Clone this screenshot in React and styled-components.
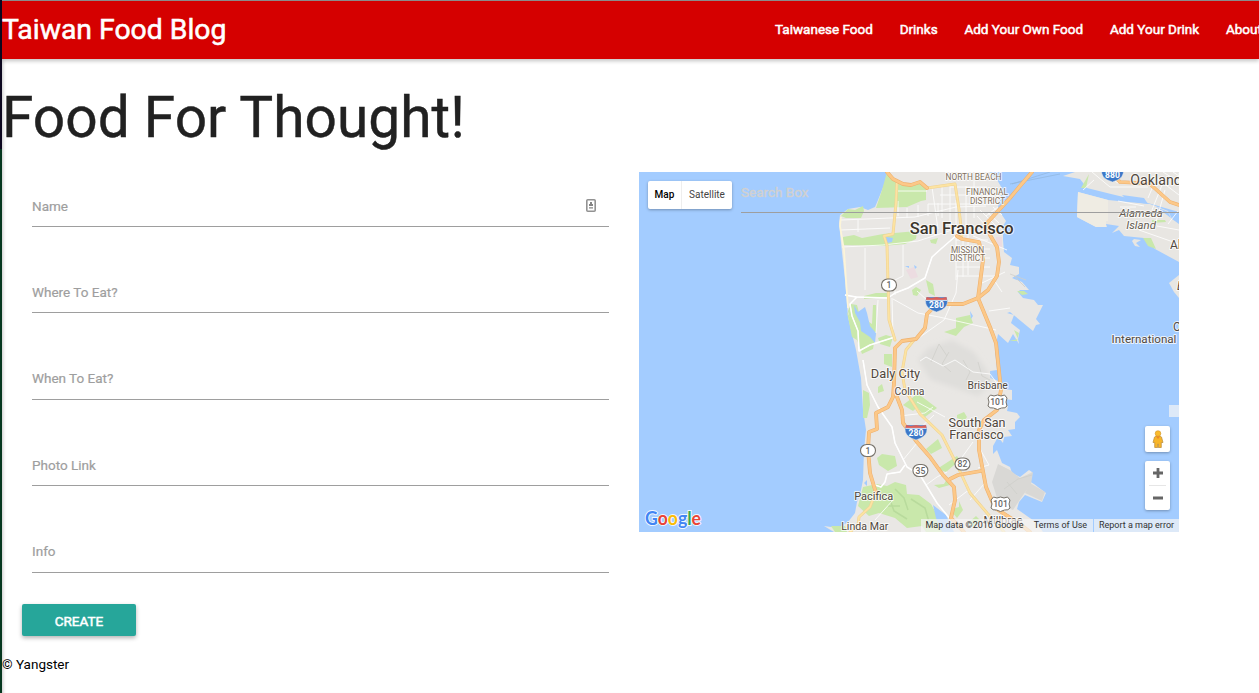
import React from "react";
import styled, { createGlobalStyle } from "styled-components";

const Global = createGlobalStyle`
  * { box-sizing: border-box; }
  html, body { margin: 0; height: 100%; overflow: hidden; background: #fff; }
  body { font-family: Roboto, "Liberation Sans", sans-serif; font-size: 13.5px; color: #212121; }
`;

const Page = styled.div`
  display: flex;
  height: 693px;
  overflow: hidden;
`;

const Edge = styled.div`
  flex: 0 0 2px;
  background: linear-gradient(#0d0820 0 149px, #06371f 149px);
`;

const Main = styled.main`
  flex: 1;
  min-width: 0;
  display: flex;
  flex-direction: column;
  box-shadow: inset 4px 0 4px -4px rgba(0, 0, 0, 0.35);
`;

const NavBar = styled.nav`
  position: relative;
  display: flex;
  align-items: center;
  justify-content: space-between;
  height: 59px;
  flex: none;
  background: #d50000;
  border-top: 1px solid #8b8b8b;
  box-shadow: 0 2px 4px rgba(0, 0, 0, 0.24);
  color: #fff;
`;

const Brand = styled.a`
  font-size: 28.35px;
  line-height: 58px;
  -webkit-text-stroke: 0.55px #fff;
  white-space: nowrap;
`;

const NavLinks = styled.div`
  display: flex;
  gap: 26.8px;
  width: 486px;
  overflow: hidden;
  white-space: nowrap;
  padding: 0 0 2px 2px;
`;

const NavLink = styled.a`
  flex: none;
  font-size: 13.5px;
  line-height: 56px;
  -webkit-text-stroke: 0.5px #fff;
`;

const Heading = styled.h1`
  margin: 0;
  height: 113px;
  font-size: 56.85px;
  font-weight: 400;
  line-height: 117px;
  white-space: nowrap;
  -webkit-text-stroke: 0.4px #212121;
`;

const Columns = styled.div`
  display: grid;
  grid-template-columns: 607px 540px;
  column-gap: 30px;
`;

const Form = styled.form`
  display: flex;
  flex-direction: column;
  align-items: stretch;
  padding-left: 30px;
`;

const Field = styled.label`
  display: flex;
  align-items: center;
  justify-content: space-between;
  height: 55px;
  padding: 13px 13px 0 0;
  margin-bottom: 31.4px;
  border-bottom: 1px solid #9e9e9e;
  color: #9e9e9e;
  -webkit-text-stroke: 0.2px #9e9e9e;
`;

const CreateButton = styled.button`
  width: 114px;
  height: 32px;
  margin: 0 0 0 -10px;
  padding: 2px 0 0;
  border: 0;
  border-radius: 2px;
  background: #26a69a;
  color: #fff;
  font: 400 13.5px/30px Roboto, "Liberation Sans", sans-serif;
  -webkit-text-stroke: 0.5px #fff;
  box-shadow: 0 2px 4px rgba(0, 0, 0, 0.3);
`;

const Footer = styled.footer`
  margin-top: 18px;
  line-height: 20px;
  color: #000;
`;

const MapFrame = styled.section`
  position: relative;
  width: 540px;
  height: 360px;
  overflow: hidden;
  background: #a3ccff;
`;

const MapArt = styled.svg`
  display: block;
  font-family: Roboto, "Liberation Sans", sans-serif;
`;

const MapToolbar = styled.div`
  position: absolute;
  top: 9px;
  left: 9px;
  right: 0;
  display: flex;
  align-items: flex-start;
  gap: 9px;
`;

const TypeSwitch = styled.div`
  display: flex;
  width: 84px;
  height: 28px;
  background: #fff;
  border-radius: 2px;
  box-shadow: 0 1px 3px rgba(0, 0, 0, 0.3);
`;

const TypeOption = styled.span`
  flex: ${(p) => (p.$active ? "0 0 33px" : "1")};
  text-align: center;
  line-height: 27px;
  font-size: 10px;
  font-weight: ${(p) => (p.$active ? 500 : 400)};
  color: ${(p) => (p.$active ? "#000" : "#444")};
  border-left: ${(p) => (p.$active ? "0" : "1px solid #eee")};
`;

const SearchBox = styled.div`
  flex: 1;
  height: 32px;
  line-height: 22px;
  color: #d1d1d1;
  -webkit-text-stroke: 0.4px #d1d1d1;
  border-bottom: 1px solid #9e9e9e;
`;

const SideControls = styled.div`
  position: absolute;
  right: 9px;
  top: 254px;
  width: 25px;
  display: flex;
  flex-direction: column;
  gap: 9px;
`;

const ControlCard = styled.div`
  display: flex;
  flex-direction: column;
  align-items: center;
  justify-content: center;
  height: ${(p) => p.$h}px;
  background: #fff;
  border-radius: 2px;
  box-shadow: 0 1px 3px rgba(0, 0, 0, 0.3);
`;

const CollapsedPanel = styled.div`
  position: absolute;
  right: 0;
  top: 233px;
  width: 10px;
  height: 12px;
  background: rgba(245, 245, 245, 0.7);
`;

const Attribution = styled.div`
  position: absolute;
  right: 0;
  bottom: 0;
  display: flex;
  height: 13px;
  font-size: 9px;
  line-height: 13px;
  color: #333;
  white-space: nowrap;
`;

const Credit = styled.span`
  width: ${(p) => p.$w}px;
  text-align: center;
  background: rgba(245, 245, 245, 0.7);
  margin-left: ${(p) => (p.$split ? 1 : 0)}px;
`;

const Logo = styled.svg`
  position: absolute;
  left: 3px;
  bottom: 0;
  font-family: Lato, "Liberation Sans", sans-serif;
`;

const LAND =
  "M887 172L885 183L882 190L878 200L875 207L868 210L860 207L848 209L840 215L839 223L841 243L845 280L848 317L856 350L861 378L863 410L866 430L864 450L863 480L860 495L857 502L855 513L848 522L838 528L824 526L834 532H1043L1037 523L1017 509L1019 502L1025 495L1042 502L1046 493L1034 484L1029 481L1032 472L1029 470L1020 477L1012 473L1010 467L1002 463L997 450L993 454V446L998 437L1003 443L1004 437L1012 436L1008 430L1015 429V422L1020 417L1017 413L1007 411L1008 406L1003 403L1004 399L1012 400V390L1003 389L1001 383L996 380L990 378V371L997 370L995 350L998 334L1008 343L1013 334L1019 344L1018 339L1020 330L1011 323L1014 315L1007 313L1010 312L1033 331L1036 325L1040 324L1036 319L1043 305H1038L1034 300L1023 298L1018 292L1020 290L1029 290L1022 282L1012 278L1019 274V267L1010 265L1012 258L1004 252L1003 240L1003 226L1006 221L1002 215L998 207L1003 190L996 178L990 172Z";

const PARKS = [
  "M887 172L894 179L904 185L919 182L926 188V200L921 201L907 207L876 208L882 190Z",
  "M841 216L848 209L855 210L863 206L864 211L861 218H846Z",
  "M843 237L854 235L862 238L883 234L917 231L916 239L905 244L883 246L843 245Z",
  "M851 304L857 305L860 316L872 324L873 305H876V332L873 349L862 354L857 340L852 328L848 311Z",
  "M847 312L853 323L857 340L852 337Z",
  "M878 338L886 335L893 337L890 347L880 344Z",
  "M912 290l4-3 5 3-4 6-4-1z",
  "M926 280l7 4 2 12-6-3z",
  "M864 296l12-3 12 0v4l-24 2z",
  "M944 332l12-4 0-10 14-3 3 8-9 4-8 9z",
  "M930 240l8-2-2 6-5-1z",
  "M884 354h8v13l-8-3z",
  "M863 390l6 3 1 12-3 13-4 0z",
  "M878 387l4-3 2 7-6 2z",
  "M903 405l13-10 4 10-7 6z",
  "M917 393l20 15-12 9-13-16z",
  "M957 415l7-3 3 5-3 4-7-3z",
  "M877 458l5-4 13 2 2 10-9 5-9-6z",
  "M926 449l12-10 4 9-11 6z",
  "M937 469l20-13 3 4-14 12z",
  "M863 487l14-3 10 2 8-4 11 3 1 9 12 1 12 9 12 22 5 6h-22l-4-6-15 2-12-10-16-5-10 3-11-10z",
  "M934 485l10-1 4-7 2 8-11 3z",
  "M952 509l7-2 0-6 4 9-6 8-5-6z",
  "M968 523l8-7 5 5-8 7z",
  "M1009 341l9-2-4-9 5 3-2 8z",
  "M831 526l14 0 2 6h-12z",
  "M1017 291l7 0 4 3-6 1z",
];

const STREETS = [
  "M841 220L915 217L956 207L986 206", "M841 230L890 228", "M842 247L883 245L918 241L955 229L985 226",
  "M858 220V232M865 248V290M895 191H927M932 187L938 229M942 187V218M950 184V230M956 200V280M966 186V225M974 180V218",
  "M845 295L856 297L888 298L895 293L908 288L925 278L932 257L942 248L957 235",
  "M857 297L850 304L852 316L858 331L859 351L870 345L895 337",
  "M878 300L876 333M892 298L893 335M893 299L918 313L939 317L970 324L996 330",
  "M895 295V280L903 276V245M917 291L927 300L937 300",
  "M863 360L867 385L878 407L892 427L895 443L907 467L920 475L937 503L951 520",
  "M905 465L900 472L887 474L885 482L881 487L875 485",
  "M900 416L925 413L933 407M917 402L945 417M918 430L934 415M903 460L917 443M920 361L926 357L943 366L955 360L973 372L990 374L1002 390",
  "M956 276H998M973 236L1007 250M994 280L1002 292M989 311L1010 308M982 283L1005 272",
  "M920 337L944 320L956 293L958 270M963 233V277M968 230V275M956 240H988M956 249H990M956 258H990M956 267H990",
  "M986 216L998 207M980 210L996 226M977 216L990 230M987 212L999 223M993 207L1002 215",
  "M926 485L937 477L947 472M960 460L973 442M980 449L989 465L978 468M949 505L970 489M970 500L984 484M893 500L884 510L875 520",
  "M950 187H987M940 195H992M928 204H998M898 201V216M907 208V218M918 205V217M928 204V216M938 203V216",
];

const EAST_STREETS = "M1092 172L1110 187H1148M1083 190L1094 180M1101 172L1118 183M1148 198L1156 179M1152 210L1162 185M1156 222L1165 190M1158 179L1179 195M1163 172L1179 182M1173 172L1179 176M1139 230L1179 244M1157 226L1179 230M1168 224L1178 211M1118 201L1144 206M1120 207H1136";

const ORANGE = [
  "M887 172L893 179L903 184L911 185L920 182L927 188",
  "M1032 172L1020 186L1010 198L987 223L990 235L997 247L999 262L997 276L988 290L978 298L963 304L937 304L927 314L925 328L916 339L902 341L895 348L894 383L893 397L888 407L876 413L877 429L869 432L868 450L870 473L876 493",
  "M957 236L962 239L979 242L983 260L978 298L990 327L996 343L1001 390L997 410L984 420L979 430V450L986 487L995 508L1020 524L1030 532",
  "M897 397L902 410L903 423L917 442L930 457L943 475L954 487L955 500L951 518L964 532",
  "M950 479L958 475L981 471",
];

const YELLOW = [
  "M927 188L955 184L959 209L962 236",
  "M897 181L896 203L893 234L884 236L887 245L889 320L895 340",
  "M914 340L906 350L902 372L905 390L920 414L942 435L957 465L970 493L987 513L1004 532",
  "M875 494L870 507L859 517L858 525L850 532",
];

const LABELS = [
  ["NORTH BEACH", 973.5, 180, 8.3, "#806f5d"], ["FINANCIAL", 987, 195, 8.3, "#806f5d"], ["DISTRICT", 987.5, 203.5, 8.3, "#806f5d"],
  ["San Francisco", 961.7, 234, 16.5, "#3d362d", 500], ["MISSION", 967.5, 253, 8.3, "#806f5d"], ["DISTRICT", 967.5, 261, 8.3, "#806f5d"],
  ["Daly City", 895.5, 378, 12.8, "#51483e"], ["Colma", 909.5, 395, 10.4, "#51483e"], ["Brisbane", 987.7, 388.5, 10.3, "#51483e"],
  ["South San", 977, 426.5, 12.6, "#51483e"], ["Francisco", 976.5, 439, 12.6, "#51483e"], ["Pacifica", 873.7, 499.5, 11, "#51483e"],
  ["Linda Mar", 864.7, 530, 10.6, "#51483e"], ["Millbrae", 1003, 524, 11, "#51483e"],
  ["Oakland", 1156, 185, 14.2, "#51483e"], ["International", 1144, 342.5, 11.6, "#51483e"],
];

function Roads({ paths, color, casing, width }) {
  return (
    <g fill="none" strokeLinejoin="round" strokeLinecap="round">
      {paths.map((d) => <path key={d} d={d} stroke={casing} strokeWidth={width + 1.1} />)}
      {paths.map((d) => <path key={d} d={d} stroke={color} strokeWidth={width} />)}
    </g>
  );
}

function RouteBadge({ x, y, n, us }) {
  return (
    <g transform={`translate(${x} ${y})`}>
      {us
        ? <path d="M-7-7Q-3.500-5 0-7Q3.500-5 7-7L9.500-4Q7.500 0 9.500 4Q8 6.500 4 6L0 7.500L-4 6Q-8 6.500-9.500 4Q-7.500 0-9.500-4Z" fill="#fff" stroke="#77726a" />
        : <rect x="-7.5" y="-6" width="15" height="12" rx="6" fill="#fff" stroke="#77726a" strokeWidth="1.1" />}
      <text y="3" textAnchor="middle" fontSize="8.6" fontWeight="500" fill="#666">{n}</text>
    </g>
  );
}

function Interstate({ x, y, n }) {
  return (
    <g transform={`translate(${x} ${y})`}>
      <path d="M-10-7H10L11-3Q11 3 5 6L0 8L-5 6Q-11 3-11-3Z" fill="#3c78c8" stroke="#dfe9f2" strokeWidth=".5" />
      <path d="M-10-7L-5-6L0-7L5-6L10-7L10.500-4H-10.500Z" fill="#d8615b" />
      <path d="M-10.500-3.600H10.500" stroke="#fff" strokeWidth=".8" />
      <text y="4" textAnchor="middle" fontSize="8.6" fontWeight="700" fill="#fff">{n}</text>
    </g>
  );
}

function BayMap() {
  return (
    <MapArt width="540" height="360" viewBox="639 172 540 360">
      <defs>
        <filter id="hills" x="-20%" y="-20%" width="140%" height="140%"><feGaussianBlur stdDeviation="2.5" /></filter>
      </defs>
      <path d="M1012 184L1050 172M1010 184L1060 174" stroke="#90b6dd" strokeWidth=".7" />
      <path d={LAND} fill="#e9e7e4" />
      <path d="M918 360l10-12 24-8 22 12 14 20 4 12-14 12-23-8-24-8z" fill="#dfdedb" filter="url(#hills)" />
      <path d="M992 482l6-18 12 6 10 8 13-6-2 12-10 14-8 12-14-6z" fill="#d9d8d5" />
      <path d="M1030 483l15 9-3 9-17-8z" fill="#d9d8d5" />
      <g fill="#e8e6e2">
        <path d="M1063 176L1075 172H1179V212L1165 208L1148 203L1136 200L1111 194L1087 188L1080 179Z" />
        <path d="M1078 192L1108 200L1128 202L1150 204L1168 211L1172 219L1179 224V262L1155 249L1144 238L1124 236L1119 230L1112 233L1119 226L1106 224L1107 227H1096L1077 217Z" />
        <path d="M1179 275L1169 283L1174 292L1179 298Z" />
        <path d="M1134 239l7 1-5 3 4 4-5-1-3-5z" />
      </g>
      <path d="M1078 192L1108 200V221H1106V227H1096L1077 217Z" fill="#efece3" />
      <path d="M1122 195l22 3 4 6-20-3zM1156 207l12 5 3 6-8-6z" fill="#a3ccff" />
      <g fill="#c9e8ab">
        {PARKS.map((d) => <path key={d} d={d} />)}
        <path d="M1081 188l8-14-3 14zM1143 238l8 0 5 11-8-3zM1152 220h13l1 2-14 1z" />
      </g>
      <path d="M906 270l8-3 4 10-7 2zM996 237h6v11h-5z" fill="#ecdce1" />
      <path d="M854 305L858 312L865 307L867 313L870 326L876 333L875 343L870 337L861 331L860 322L855 313ZM886 237l7 1-1 4-5 1zM933 505l13 10 8 17h-12l-6-14zM970 311l3 5-2 3zM905 266l4 0v2zM914 265l3 2-2 2zM864 483l3-3v6z" fill="#a3ccff" />
      <g fill="none" stroke="#b4d799" strokeWidth="1.5" opacity=".8">
        <path d="M878 492l11 5 5 14 13 8M895 489l9 9 4 12M911 499l14 9 4 14M888 506l12 0" />
      </g>
      <path d="M931 362l8-18 8 12M949 352l-7 12 9 8M963 360l7 12-4 8M978 362l4 14 8 4M1014 276l11 11M1010 274l16 6M1004 489l14-10 14-4M1007 482l10 12" fill="none" stroke="#cfcfca" strokeWidth=".8" />
      <g fill="none" stroke="#fff" strokeWidth="1" strokeLinejoin="round" opacity=".8">
        {STREETS.map((d) => <path key={d} d={d} />)}
        <path d={EAST_STREETS} />
      </g>
      <g fill="none" stroke="#fff" strokeWidth="1.5" strokeLinejoin="round">
        <path d={STREETS[4]} />
        <path d={STREETS[5]} />
        <path d={STREETS[8]} />
        <path d={STREETS[9]} />
      </g>
      <path d="M841 217L840 226L844 250L846 280L848 308" fill="none" stroke="#fdf5d8" strokeWidth="1.7" />
      <Roads paths={YELLOW} color="#fce3a2" casing="#f0d292" width={1.8} />
      <Roads paths={ORANGE} color="#fcc888" casing="#eeb06d" width={2.7} />
      <Roads paths={["M1110 172L1120 182L1140 183L1150 184L1160 193L1170 202L1179 205"]} color="#fcc888" casing="#eeb06d" width={2.5} />
      <RouteBadge x={889} y={285} n="1" />
      <RouteBadge x={868} y={450.5} n="1" />
      <RouteBadge x={920.4} y={470.5} n="35" />
      <RouteBadge x={962.5} y={464} n="82" />
      <RouteBadge x={997.5} y={402} n="101" us />
      <RouteBadge x={1000.5} y={504} n="101" us />
      <Interstate x={936.5} y={304} n="280" />
      <Interstate x={916} y={432} n="280" />
      <Interstate x={1112.5} y={174} n="880" />
      <g textAnchor="middle" stroke="#fff" strokeOpacity=".75" strokeWidth="2" paintOrder="stroke" strokeLinejoin="round">
        {LABELS.map(([label, x, y, size, fill, weight = 400]) => (
          <text key={label + x + y} x={x} y={y} fontSize={size} fontWeight={weight} fill={fill}>{label}</text>
        ))}
        <g fontSize="11.4" fontStyle="italic" fill="#655c51">
          <text x="1141" y="217">Alameda</text>
          <text x="1141" y="229">Island</text>
        </g>
        <g textAnchor="start" fontSize="12" fill="#51483e">
          <text x="1170" y="249">Ala</text>
          <text x="1173" y="331">Oak</text>
          <text x="1177" y="290" fontStyle="italic">B</text>
        </g>
      </g>
      <path d="M741 212.500H1179" stroke="#9e9e9e" />
    </MapArt>
  );
}

const LOGO = [["G", "#4285f4"], ["o", "#ea4335"], ["o", "#fbbc05"], ["g", "#4285f4"], ["l", "#34a853"], ["e", "#ea4335"]];

export default function App() {
  return (
    <Page>
      <Global />
      <Edge />
      <Main>
        <NavBar>
          <Brand>Taiwan Food Blog</Brand>
          <NavLinks>
            {["Taiwanese Food", "Drinks", "Add Your Own Food", "Add Your Drink", "About"].map((t) => <NavLink key={t}>{t}</NavLink>)}
          </NavLinks>
        </NavBar>
        <Heading>Food For Thought!</Heading>
        <Columns>
          <Form>
            {["Name", "Where To Eat?", "When To Eat?", "Photo Link", "Info"].map((t) => (
              <Field key={t}>
                {t}
                {t === "Name" && (
                  <svg width="10" height="13" viewBox="0 0 10 13">
                    <rect x=".8" y=".8" width="8.4" height="11.4" rx="1" fill="#fff" stroke="#929292" strokeWidth="1.6" />
                    <path d="M4 3h2v2h1v2H3V5h1zM3 8.2h4v1.300H3z" fill="#858585" />
                  </svg>
                )}
              </Field>
            ))}
            <CreateButton type="button">CREATE</CreateButton>
          </Form>
          <MapFrame>
            <BayMap />
            <MapToolbar>
              <TypeSwitch>
                <TypeOption $active>Map</TypeOption>
                <TypeOption>Satellite</TypeOption>
              </TypeSwitch>
              <SearchBox>Search Box</SearchBox>
            </MapToolbar>
            <CollapsedPanel />
            <SideControls>
              <ControlCard $h={26}>
                <svg width="12" height="19" viewBox="0 0 12 19">
                  <path d="M2.5 7L4 6h4l1.5 1L11 12.500H9.300V17.500H6.300V14H5.700V17.500H2.700V12.500H1Z" fill="#f7b529" stroke="#b98a3a" strokeWidth=".7" />
                  <circle cx="6" cy="3.5" r="2.8" fill="#fbbb2d" stroke="#d19528" strokeWidth=".6" />
                  <path d="M4 6.600L6 9l2-2.400z" fill="#ee862b" />
                </svg>
              </ControlCard>
              <ControlCard $h={49}>
                <svg width="25" height="49" viewBox="0 0 25 49">
                  <path d="M8 12h10M13 7v10M8 37h10" stroke="#666" strokeWidth="2.8" />
                  <path d="M4 24.500h17" stroke="#e6e6e6" />
                </svg>
              </ControlCard>
            </SideControls>
            <Logo width="64" height="25" viewBox="0 0 64 25">
              <text x="3" y="18" fontSize="19" textLength="56" lengthAdjust="spacingAndGlyphs" stroke="#fff" strokeOpacity=".85" strokeWidth="2" paintOrder="stroke" fontWeight="700">
                {LOGO.map(([l, c], i) => <tspan key={i} fill={c}>{l}</tspan>)}
              </text>
            </Logo>
            <Attribution>
              <Credit $w={107}>Map data ©2016 Google</Credit>
              <Credit $w={65}>Terms of Use</Credit>
              <Credit $w={85} $split>Report a map error</Credit>
            </Attribution>
          </MapFrame>
        </Columns>
        <Footer>© Yangster</Footer>
      </Main>
    </Page>
  );
}
